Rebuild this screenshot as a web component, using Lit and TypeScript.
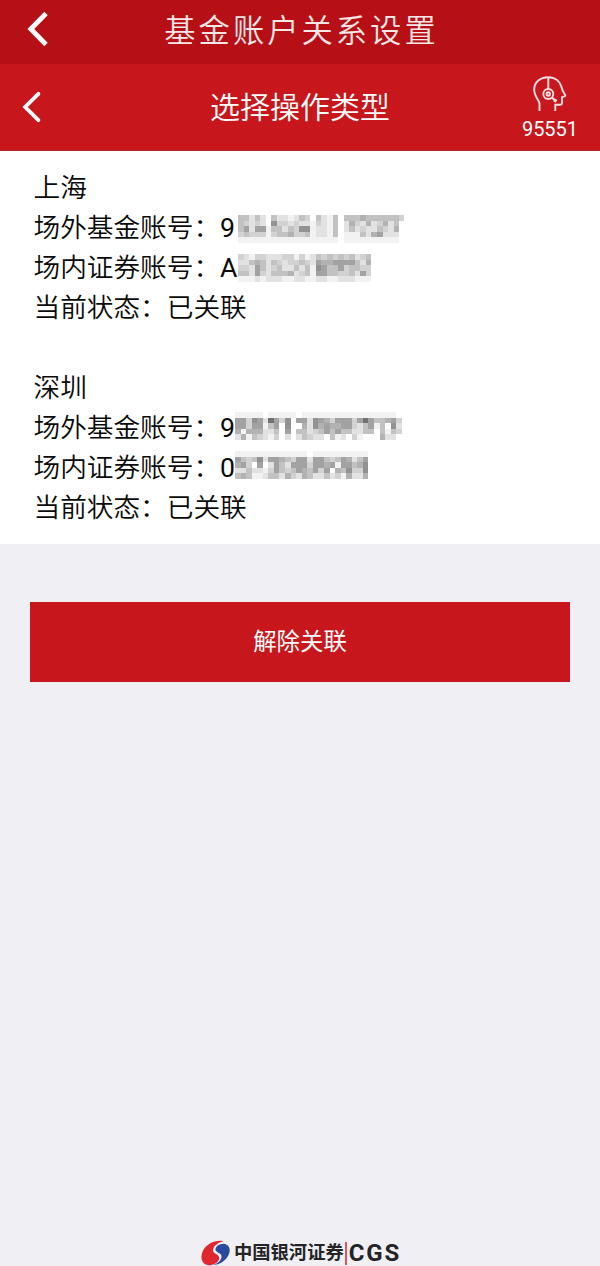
import { LitElement, html, svg, css } from "lit";
import { customElement, property } from "lit/decorators.js";

const CELL = 5.56;

/** Grey mosaic that masks the private digits; each hex digit is a cell's level. */
@customElement("masked-digits")
class MaskedDigits extends LitElement {
  @property({ attribute: false }) rows: string[] = [];

  static styles = css`
    :host { display: block; }
    svg { display: block; }
  `;

  render() {
    const w = this.rows[0].length * CELL;
    const h = this.rows.length * CELL;
    return html`<svg width=${w} height=${h} viewBox="0 0 ${w} ${h}" shape-rendering="crispEdges" aria-hidden="true">
      ${this.rows.map((row, y) =>
        [...row].map((c, x) => {
          const v = Math.min(255, parseInt(c, 16) * 16 + 18);
          return svg`<rect x=${x * CELL} y=${y * CELL} width=${CELL} height=${CELL} fill="rgb(${v},${v},${v})"></rect>`;
        })
      )}
    </svg>`;
  }
}

interface Account {
  city: string;
  maskClass: string;
  fund: { first: string; mask: string[] };
  stock: { first: string; mask: string[] };
}

const ACCOUNTS: Account[] = [
  {
    city: "上海",
    maskClass: "mask-a",
    fund: {
      first: "9",
      mask: [
        "bbdbdfbddedbcfbdebfbbbabbbbbbc",
        "bcdcdf8ccdcddecdebfdacdadcadbf",
        "b9d99ebbdbc88eddebfdbdcddbcdaf",
        "cbcccecbbaccbeddebfeeebda9dddf",
        "eeeeeeeeeeeeeeeeeefeeeeeeeeeef",
      ],
    },
    stock: {
      first: "A",
      mask: [
        "cdeccdddccecedbcbcbcbdcb",
        "ddbabdbcdccbcd9aa9999bda",
        "ccd9bdcbddbdbe89bb9cbbcc",
        "bbd9cdbbbadcbe99bbccbd9c",
        "eeededddeeddeeddeedddeee",
      ],
    },
  },
  {
    city: "深圳",
    maskClass: "mask-b",
    fund: {
      first: "9",
      mask: [
        "eeeeefeeeeefeeeeeeeeeeeeeeeeef",
        "99c89d69c8f99d89ac999c969bba9c",
        "99c99eb9f8ffad8a9aa99cdb9ebf8d",
        "aeaaaddbf9fbbdcb9b9bbddbbfbebc",
        "daebcdecfdfdbcddfbedfcefffaddf",
      ],
    },
    stock: {
      first: "0",
      mask: [
        "eeeeeeeeeeeeefeeeeeeeeee",
        "9bcb8d99abc99d99bcb9adb9",
        "a9cf9fd9bd999c99a9e99ba8",
        "ddbddec9bcb9ab9c9fab8cc8",
        "babeedbbdacdabddbdceadda",
      ],
    },
  },
];

@customElement("app-root")
class AppRoot extends LitElement {
  static styles = css`
    :host {
      display: flex;
      flex-direction: column;
      height: 1266px;
      overflow: hidden;
      background: #efeff4;
      color: #0a0a0a;
      font-family: Roboto, "Noto Sans CJK SC", sans-serif;
    }
    * { box-sizing: border-box; }
    svg { display: block; }
    .top, .sub {
      display: grid;
      align-items: center;
      color: #fff;
      white-space: nowrap;
      flex: none;
    }
    .top {
      height: 64px;
      background: #b60f15;
      grid-template-columns: 100px 1fr 100px;
    }
    .top .back { padding: 0 0 6px 27px; }
    .top h1 {
      margin: 0;
      font-size: 31.3px;
      font-weight: 350;
      letter-spacing: 3px;
      line-height: 46px;
      text-align: center;
      text-indent: 3px;
      color: #f9e6e7;
    }
    .sub {
      height: 87px;
      background: #c8171c;
      border-bottom: 1px solid #b8262a;
      grid-template-columns: 100px 1fr 100px;
    }
    .sub .back { padding: 0 0 1px 22px; }
    .sub h2 {
      margin: 0;
      padding-top: 1px;
      font-size: 30px;
      font-weight: 350;
      line-height: 44px;
      text-align: center;
    }
    .service {
      display: flex;
      flex-direction: column;
      align-items: center;
      gap: 5px;
      font-size: 20px;
      line-height: 24px;
      padding-top: 2px;
    }
    .accounts {
      flex: none;
      height: 393px;
      padding: 17px 33.5px 0;
      background: #fff;
      font-size: 26.67px;
      font-weight: 350;
    }
    .account + .account { margin-top: 40px; }
    .line {
      display: flex;
      height: 40px;
      line-height: 40px;
      white-space: nowrap;
    }
    .first { flex: none; font-weight: 400; }
    .mask-a .first { width: 17.5px; }
    .mask-b .first { width: 15px; }
    .mask-a .fund masked-digits { margin-top: 7px; }
    .mask-a .stock masked-digits { margin-top: 6px; }
    .mask-b .fund masked-digits { margin-top: 4px; }
    .mask-b .stock masked-digits { margin-top: 3px; }
    .unlink {
      flex: none;
      height: 80px;
      margin: 58px 30px 0;
      padding: 0;
      border: 0;
      background: #c8171c;
      color: #fff;
      font: 400 23.4px/80px Roboto, "Noto Sans CJK SC", sans-serif;
    }
    .brand {
      display: flex;
      align-items: center;
      justify-content: center;
      height: 26px;
      margin-top: auto;
      padding-left: 2px;
      color: #242426;
      white-space: nowrap;
    }
    .brand-name {
      margin-left: 4px;
      font-size: 18.3px;
      font-weight: 700;
      line-height: 26px;
    }
    .bar { flex: none; width: 2px; height: 23px; margin: 0 2px 0 1px; background: #e0555b; }
    .cgs {
      font: 700 24px/24px Roboto, sans-serif;
      letter-spacing: 1.8px;
    }
  `;

  private account(a: Account) {
    return html`<section class="account ${a.maskClass}">
      <div class="line">${a.city}</div>
      <div class="line fund"><span>场外基金账号：</span><span class="first">${a.fund.first}</span><masked-digits .rows=${a.fund.mask}></masked-digits></div>
      <div class="line stock"><span>场内证券账号：</span><span class="first">${a.stock.first}</span><masked-digits .rows=${a.stock.mask}></masked-digits></div>
      <div class="line">当前状态：已关联</div>
    </section>`;
  }

  render() {
    return html`
      <header class="top">
        <div class="back">
          <svg width="22" height="36" viewBox="0 0 22 36" fill="none" stroke="#fff" stroke-width="4.8">
            <path d="M19 2.500 3.800 18 19 33.500"></path>
          </svg>
        </div>
        <h1>基金账户关系设置</h1>
      </header>
      <div class="sub">
        <div class="back">
          <svg width="20" height="32" viewBox="0 0 20 32" fill="none" stroke="#fff" stroke-width="3.8" stroke-linecap="round">
            <path d="M16.400 2.800 3.200 16 16.400 29.200"></path>
          </svg>
        </div>
        <h2>选择操作类型</h2>
        <div class="service">
          <svg width="34" height="36" viewBox="0 0 34 36" fill="none" stroke="#fbe0e1" stroke-width="1.9">
            <path d="M6.500 35V27.500C6 24 1.200 20.500 1.200 13.500C1.200 6 7.500 1.200 15 1.200C22.500 1.200 27 5.500 28.300 10.500C28.800 13 29.500 15.300 32.200 19Q32.700 20.500 29 21.200V27Q28.800 28.800 27 28.800H22.300V35"></path>
            <path d="M15.300 1.200V13"></path>
            <circle cx="15.300" cy="18" r="5"></circle>
            <circle cx="15.300" cy="18" r="1.700"></circle>
            <path d="M19 21.500 22 24.500"></path>
            <path d="M21 23.800 23.500 25.400" stroke-width="3.200"></path>
          </svg>
          <span>95551</span>
        </div>
      </div>
      <main class="accounts">${ACCOUNTS.map((a) => this.account(a))}</main>
      <button class="unlink">解除关联</button>
      <footer class="brand">
        <svg width="29" height="26" viewBox="0 0 29 26">
          <path fill="#e0262e" d="M22.500 1.200C15-.5 5.500 3.500 1.800 11C-1.200 18 .8 24.500 7.500 25.200C13.500 25.500 18.500 21.500 18.300 17.500C18 14 11.800 14 12 10C12.200 6 17 2.500 22.500 1.200Z"></path>
          <path fill="#2a4aa0" d="M22.500 3.700C28 4.200 30 9 28 14C25.500 20.500 18.500 24.800 11.500 25.200C17 23.500 20.800 20 20.500 16C20.200 12.500 14 12.500 14.500 9C15 6 18.500 3.800 22.500 3.700Z"></path>
        </svg>
        <span class="brand-name">中国银河证券</span>
        <span class="bar"></span>
        <span class="cgs">CGS</span>
      </footer>
    `;
  }
}
